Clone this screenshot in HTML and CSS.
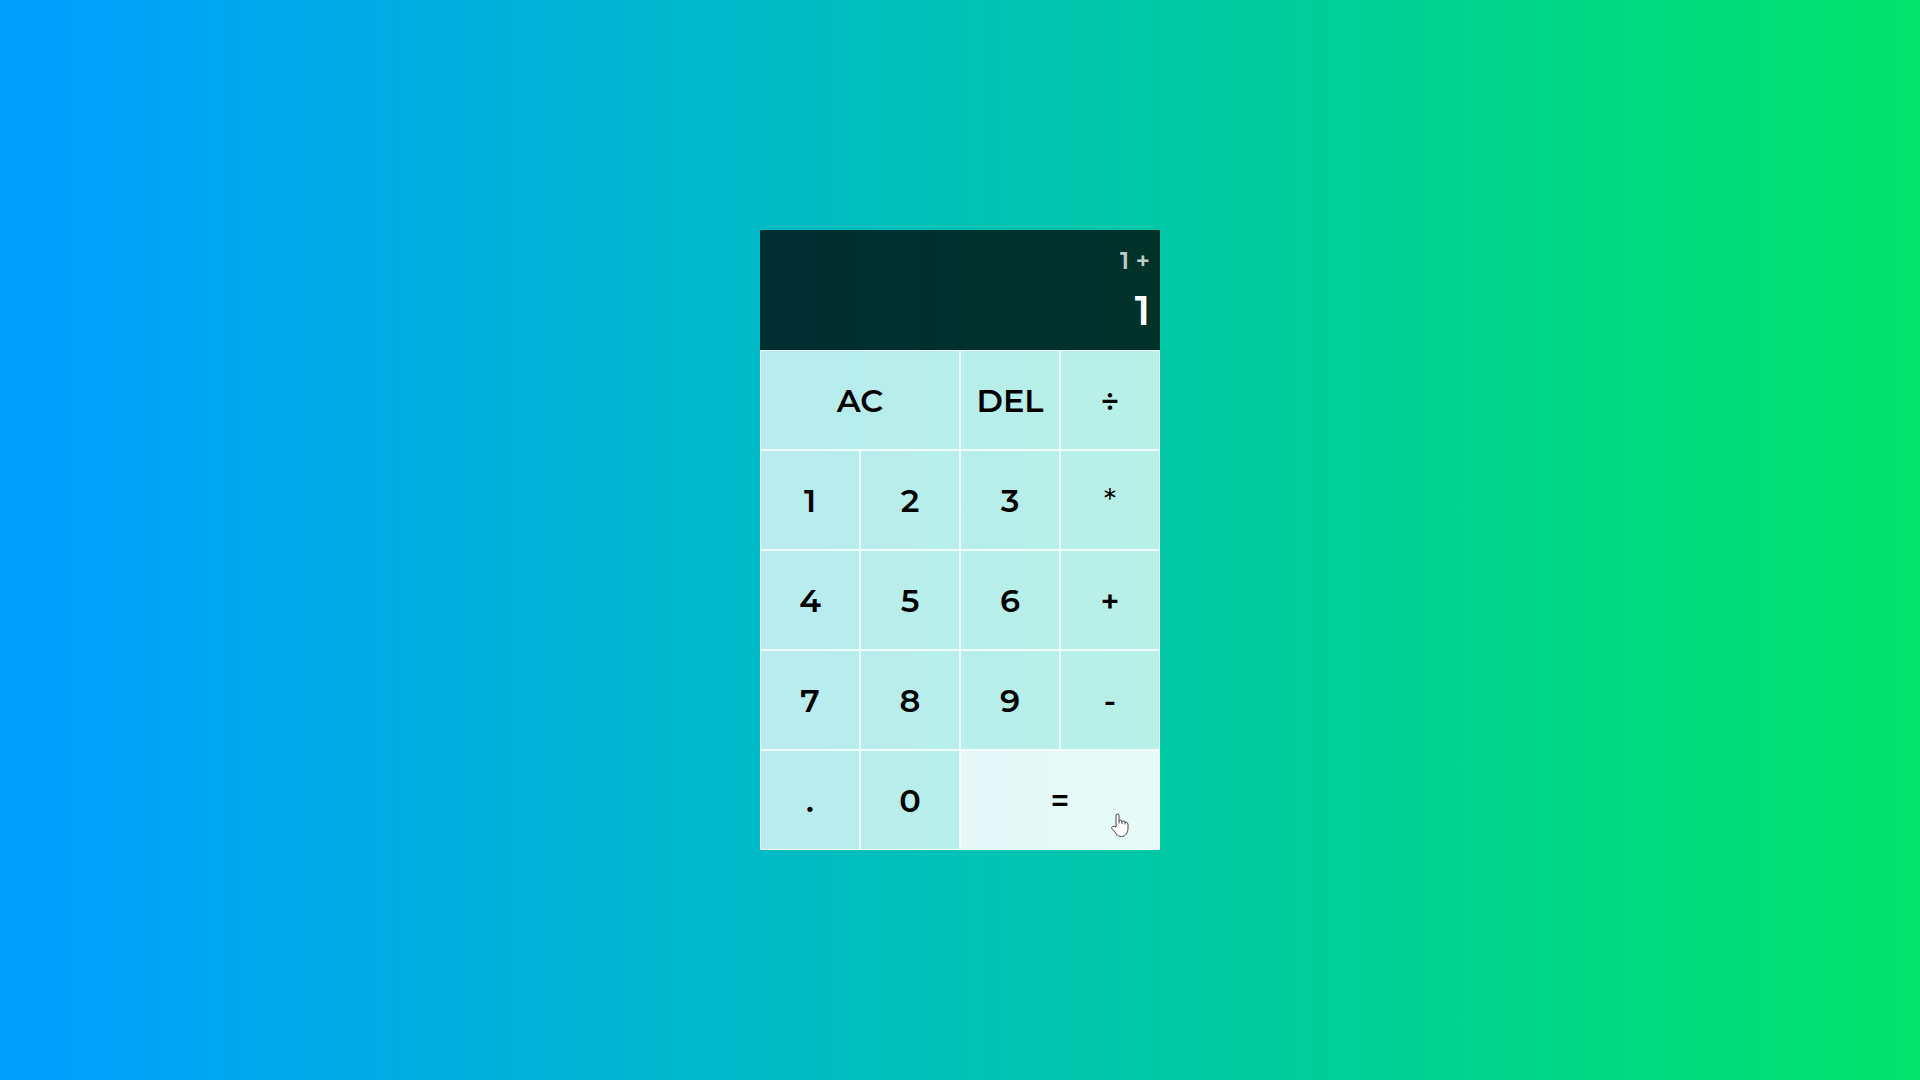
FILE: index.html
```html
<!DOCTYPE html>
<html lang="en">
<head>
    <meta charset="UTF-8">
    <meta name="viewport" content="width=device-width, initial-scale=1.0">
    <title>Calculator</title>
    <link rel="stylesheet" href="styles.css">
</head>
<body>
    <main class="calculator-grid">
        <div class="output">
            <div class="previous-operand">1 +</div>
            <div class="current-operand">1</div>
        </div>
        <button class="span-two">AC</button>
        <button>DEL</button>
        <button>÷</button>
        <button>1</button>
        <button>2</button>
        <button>3</button>
        <button class="multiply">*</button>
        <button>4</button>
        <button>5</button>
        <button>6</button>
        <button>+</button>
        <button>7</button>
        <button>8</button>
        <button>9</button>
        <button>-</button>
        <button>.</button>
        <button>0</button>
        <button class="span-two active">=
            <svg class="pointer" viewBox="0 0 18 24" aria-hidden="true">
                <path d="M5 14V2.500a1.500 1.500 0 0 1 3 0V7.500q2-1 3 .7 2-.7 3 1 2.500-.5 3 1.800V15c0 5-2.500 8.500-6.500 8.500-4 0-5-2-6.500-4.500L.8 15.500c-.5-1.500.7-2.500 2-2z"/>
                <path d="M8 7.500v3M11 8.200v2.800M14 9.200v2.300"/>
            </svg>
        </button>
    </main>
</body>
</html>
```
FILE: styles.css
```css
*, *::before, *::after {
    box-sizing: border-box;
    font-family: Gotham Rounded, Montserrat, "Open Sans", sans-serif;
    font-weight: 600;
}

body {
    margin: 0;
    padding: 0;
    background: linear-gradient(to right, #00A0FF 2%, #00E36C 99%);
}

.calculator-grid {
    display: grid;
    justify-content: center;
    align-content: center;
    min-height: 100vh;
    grid-template-columns: repeat(4, 100px);
    grid-template-rows: minmax(120px, auto) repeat(5, 100px);
}

.calculator-grid > button {
    cursor: pointer;
    font-size: 32px;
    border: 1px solid rgba(255, 255, 255, .8);
    outline: none;
    padding: 0;
    color: black;
    background-color: rgba(255, 255, 255, .72);
}

.calculator-grid > .multiply {
    font-weight: 400;
}

.calculator-grid > .active {
    position: relative;
    background-color: rgba(255, 255, 255, .9);
}

.span-two {
    grid-column: span 2;
}

.output {
    grid-column: 1 / -1;
    background-color: rgba(0, 0, 0, .75);
    display: flex;
    align-items: flex-end;
    justify-content: space-around;
    flex-direction: column;
    padding: 10px;
    word-wrap: break-word;
    word-break: break-all;
}

.previous-operand {
    color: rgba(255, 255, 255, .75);
    font-size: 24px;
}

.current-operand {
    color: white;
    font-size: 40px;
}

.pointer {
    position: absolute;
    right: 30px;
    bottom: 12px;
    width: 18px;
    height: 24px;
    fill: white;
    stroke: #444;
}
```
